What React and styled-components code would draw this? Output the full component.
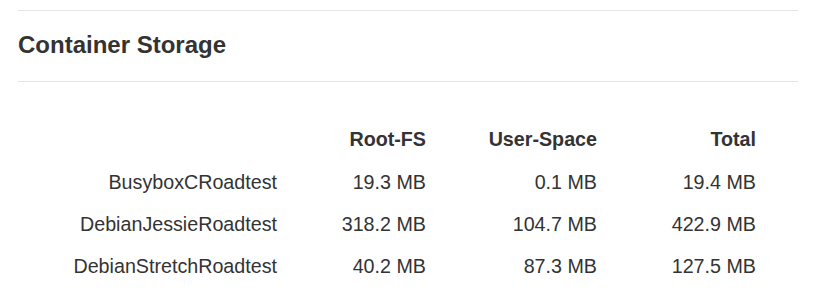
import styled, { createGlobalStyle } from 'styled-components';

const rows = [
  { name: 'BusyboxCRoadtest', root: '19.3 MB', user: '0.1 MB', total: '19.4 MB' },
  { name: 'DebianJessieRoadtest', root: '318.2 MB', user: '104.7 MB', total: '422.9 MB' },
  { name: 'DebianStretchRoadtest', root: '40.2 MB', user: '87.3 MB', total: '127.5 MB' },
];

const App = () => {
  return (
    <>
      <GlobalStyle />
      <Panel>
        <Header>
          <Title>Container Storage</Title>
        </Header>
        <Table>
          <HeadRow>
            <Cell />
            <Cell>Root-FS</Cell>
            <Cell>User-Space</Cell>
            <Cell>Total</Cell>
          </HeadRow>
          {rows.map((r) => (
            <Row key={r.name}>
              <Cell>{r.name}</Cell>
              <Cell>{r.root}</Cell>
              <Cell>{r.user}</Cell>
              <Cell>{r.total}</Cell>
            </Row>
          ))}
        </Table>
      </Panel>
    </>
  );
};

export default App;

const GlobalStyle = createGlobalStyle`
  body {
    margin: 0;
    background: #fff;
    font-family: "Liberation Sans", Arial, sans-serif;
    color: #333;
  }
`;

const Panel = styled.div`
  margin: 10px 31px 0 18px;
`;

const Header = styled.div`
  border-top: 1px solid #e5e5e5;
  border-bottom: 1px solid #e5e5e5;
  padding: 22px 0 24px;
`;

const Title = styled.h3`
  margin: 0;
  font-size: 24px;
  line-height: 24px;
  font-weight: bold;
  color: #333;
`;

const Table = styled.div`
  margin-top: 36px;
`;

const Row = styled.div`
  display: grid;
  grid-template-columns: 259px 149px 171px 159px;
  height: 42px;
  font-size: 19.7px;
  line-height: 42px;
`;

const HeadRow = styled(Row)`
  height: 43px;
  font-weight: bold;
`;

const Cell = styled.div`
  text-align: right;
  white-space: nowrap;
`;
